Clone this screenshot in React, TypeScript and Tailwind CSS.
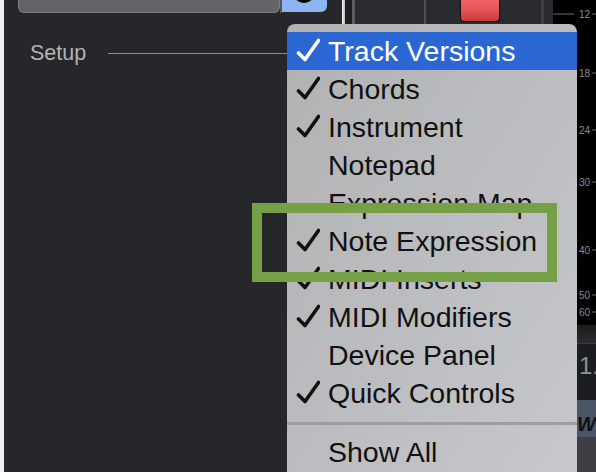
import { Fragment } from "react";

type Item = { label: string; checked?: boolean; active?: boolean };

const items: Item[] = [
    { label: "Track Versions", checked: true, active: true },
    { label: "Chords", checked: true },
    { label: "Instrument", checked: true },
    { label: "Notepad" },
    { label: "Expression Map" },
    { label: "Note Expression", checked: true },
    { label: "MIDI Inserts", checked: true },
    { label: "MIDI Modifiers", checked: true },
    { label: "Device Panel" },
    { label: "Quick Controls", checked: true },
];

const scale = [
    { v: "12", y: 14 },
    { v: "18", y: 73 },
    { v: "24", y: 130 },
    { v: "30", y: 182 },
    { v: "40", y: 250 },
    { v: "50", y: 295 },
    { v: "60", y: 312 },
];

const Check = ({ white }: { white?: boolean }) => (
    <svg width="24" height="24" viewBox="0 0 24 24" className="shrink-0 -mt-[3px]">
        <path
            d="M2.5 15 L9 21.5 L22.5 2.5"
            fill="none"
            stroke={white ? "#ffffff" : "#111111"}
            strokeWidth="3.6"
            strokeLinecap="round"
            strokeLinejoin="round"
        />
    </svg>
);

const MenuRow = ({ item }: { item: Item }) => (
    <div
        className={`flex items-center h-[38px] pl-[9px] ${item.active ? "bg-[#2b67d2] text-white" : "text-[#111111]"}`}
    >
        <div className="w-[24px] flex justify-center">{item.checked && <Check white={item.active} />}</div>
        <span className="ml-[8px] text-[28.5px] leading-[38px] whitespace-nowrap">{item.label}</span>
    </div>
);

const App = () => {
    return (
        <div className="relative w-[596px] h-[472px] overflow-hidden flex bg-[#25272a] font-['Liberation_Sans',Arial,sans-serif]">
            <div className="w-[4px] bg-[#f1f1f1]" />

            {/* left inspector */}
            <div className="w-[338px] flex flex-col">
                <div className="flex">
                    <div className="ml-[14px] w-[262px] h-[13px] bg-[#646467] border border-t-0 border-[#7d7d81] rounded-b-[6px]" />
                    <div className="w-[2px] h-[13px] bg-[#55565a]" />
                    <div className="relative w-[45px] h-[12px] bg-[#8cb5f1] rounded-br-[6px] overflow-hidden">
                        <div className="absolute left-[11px] -top-[19px] w-[22px] h-[22px] rounded-full bg-black" />
                    </div>
                </div>
                <div className="mt-[28px] flex items-center h-[24px]">
                    <span className="pl-[26px] text-[21.5px] leading-[24px] text-[#b3b3b3]">Setup</span>
                    <div className="ml-[22px] flex-1 h-[1px] bg-[#8a8a8c]" />
                </div>
            </div>

            <div className="w-[3px] bg-gradient-to-r from-[#f4f4f4] to-[#b9b9b9]" />

            {/* mixer strip */}
            <div className="w-[208px] flex">
                <div className="w-[7px] bg-[#1e1f21]" />
                <div className="w-[3px] bg-[#5c5c60]" />
                <div className="w-[69px] bg-[#2b2c2f]" />
                <div className="w-[2px] bg-[#505054]" />
                <div className="w-[34px] bg-[#2a2b2e]" />
                <div className="w-[40px] bg-[#2a2b2e]">
                    <div className="h-[22px] rounded-b-[4px] border border-t-0 border-[#1a0a0a] bg-gradient-to-b from-[#ef6565] via-[#e65353] to-[#c83a3a]" />
                </div>
                <div className="w-[41px] bg-[#2a2b2e]" />
                <div className="w-[3px] bg-[#3e3f43]" />
                <div className="w-[9px] bg-[#2a2b2e]" />
            </div>

            {/* meter scale */}
            <div className="w-[43px] flex flex-col">
                <div className="h-[325px] bg-black">
                    <svg width="43" height="325" className="block">
                        {scale.map((s) => (
                            <Fragment key={s.v}>
                                <line x1="0" y1={s.y} x2="21" y2={s.y} stroke="#6a6a6a" strokeWidth="1" />
                                <text x="26" y={s.y + 4} fontSize="10" fill="#8c8c8c" fontFamily="Liberation Sans, Arial, sans-serif">
                                    {s.v}
                                </text>
                                <line x1="39" y1={s.y} x2="43" y2={s.y} stroke="#6a6a6a" strokeWidth="1" />
                            </Fragment>
                        ))}
                    </svg>
                </div>
                <div className="h-[18px] bg-gradient-to-b from-[#1a1b1d] to-[#2c2d30]" />
                <div className="h-[57px] bg-[#1c1d20] border-t border-[#3a3b3e] pt-[10px] pl-[26px] text-[24px] leading-[24px] text-[#8e9094] whitespace-nowrap">
                    1.:
                </div>
                <div className="h-[37px] bg-[#4a5668] pl-[24px] pt-[14px] text-[20px] leading-[20px] font-bold italic text-[#111]">W</div>
                <div className="flex-1 bg-[#3d3f44]" />
            </div>

            {/* popup menu */}
            <div className="absolute left-[287px] top-[24px] w-[290px] h-[460px] rounded-t-[8px] bg-gradient-to-br from-[#b1b1b3] to-[#c6c8cc] pt-[8px]">
                {items.map((item) => (
                    <MenuRow key={item.label} item={item} />
                ))}
                <div className="mt-[10px] h-[3px] bg-[#9c9ea2]" />
                <div className="mt-[8px]">
                    <MenuRow item={{ label: "Show All" }} />
                </div>
            </div>

            {/* highlight */}
            <div className="absolute left-[252px] top-[203px] w-[305px] h-[79px] border-[10px] border-[#76a046]" />
        </div>
    );
};

export default App;
